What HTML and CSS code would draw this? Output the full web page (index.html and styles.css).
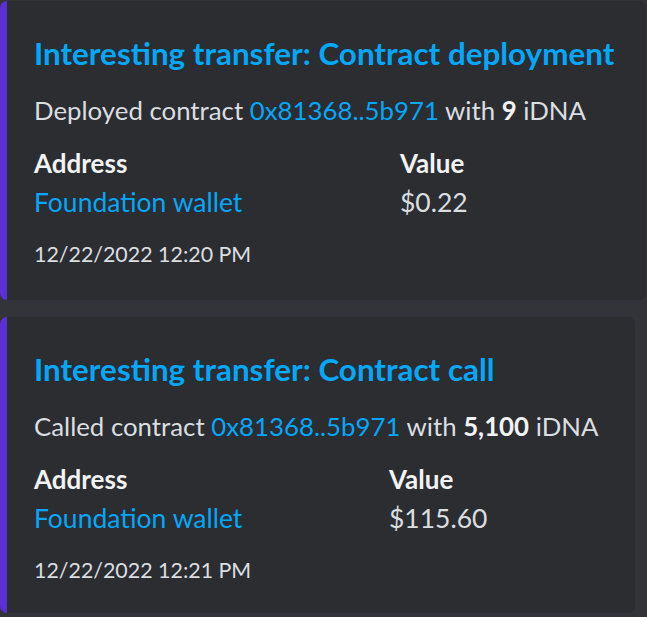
FILE: index.html
```html
<!DOCTYPE html>
<html>
<head>
<meta charset="utf-8">
<link rel="stylesheet" href="styles.css">
</head>
<body>
<div class="feed">
  <article class="embed embed-wide">
    <h2 class="title">Interesting transfer: Contract deployment</h2>
    <p class="desc">Deployed contract <a class="link">0x81368..5b971</a> with <b>9</b> iDNA</p>
    <div class="fields">
      <div class="field">
        <div class="fname">Address</div>
        <div class="fvalue"><a class="link">Foundation wallet</a></div>
      </div>
      <div class="field">
        <div class="fname">Value</div>
        <div class="fvalue">$0.22</div>
      </div>
    </div>
    <div class="footer">12/22/2022 12:20 PM</div>
  </article>
  <article class="embed embed-narrow">
    <h2 class="title">Interesting transfer: Contract call</h2>
    <p class="desc">Called contract <a class="link">0x81368..5b971</a> with <b>5,100</b> iDNA</p>
    <div class="fields">
      <div class="field">
        <div class="fname">Address</div>
        <div class="fvalue"><a class="link">Foundation wallet</a></div>
      </div>
      <div class="field">
        <div class="fname">Value</div>
        <div class="fvalue">$115.60</div>
      </div>
    </div>
    <div class="footer">12/22/2022 12:21 PM</div>
  </article>
</div>
</body>
</html>
```
FILE: styles.css
```css
html, body {
  margin: 0;
  padding: 0;
  background: #323439;
}
body {
  font-family: Lato, "Noto Sans", sans-serif;
  color: #dbdee1;
}
.feed {
  padding-top: 1px;
  display: flex;
  flex-direction: column;
  gap: 17px;
}
.embed {
  box-sizing: border-box;
  background: #2b2d31;
  border-left: 7px solid #5a2fd4;
  border-radius: 7px;
  padding: 33px 29px 0 27px;
}
.embed-wide { width: 646px; height: 299px; }
.embed-narrow { width: 635px; height: 296px; }
.title {
  margin: 0;
  font-size: 31.4px;
  line-height: 38px;
  font-weight: 700;
  color: #00a8fc;
}
.desc {
  margin: 21px 0 0;
  font-size: 25.8px;
  line-height: 34px;
}
.desc b { color: #f2f3f5; font-weight: 700; }
.link { color: #00a8fc; text-decoration: none; }
.fields {
  margin-top: 20px;
  display: grid;
  grid-template-columns: 1fr 217px;
}
.fname {
  font-size: 26px;
  line-height: 32px;
  font-weight: 700;
  color: #f2f3f5;
}
.fvalue {
  margin-top: 3px;
  font-size: 26.5px;
  line-height: 40px;
}
.footer {
  margin-top: 16px;
  font-size: 21.4px;
  line-height: 32px;
}
```
